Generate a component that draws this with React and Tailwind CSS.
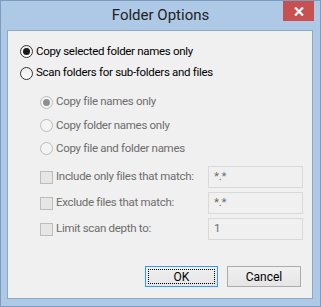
import React from "react";

const font = { fontFamily: 'Roboto, "Noto Sans", sans-serif' };

function Radio({ checked, disabled }) {
  return (
    <span
      className={
        "relative inline-flex items-center justify-center w-[13px] h-[13px] rounded-full border shrink-0 " +
        (disabled
          ? "border-[#bcbcbc] bg-[#f4f4f4]"
          : "border-[#333333] bg-gradient-to-b from-[#ececec] to-[#ffffff]")
      }
    >
      {checked && (
        <span
          className={
            "w-[7px] h-[7px] rounded-full " +
            (disabled ? "bg-[#8f8f8f]" : "bg-[#1a1a1a]")
          }
        />
      )}
    </span>
  );
}

function Checkbox() {
  return (
    <span className="inline-block w-[13px] h-[13px] border border-[#bcbcbc] bg-[#e6e6e6] shrink-0" />
  );
}

export default function App() {
  return (
    <div
      className="w-[321px] h-[307px] bg-[#adc9e6] border border-[#7d9dc0] flex flex-col"
      style={font}
    >
      <div className="relative h-[29px] flex items-center justify-center">
        <span className="text-[15px] text-[#222] leading-none mt-[-1px]">Folder Options</span>
        <div className="absolute right-[6px] top-0 w-[31px] h-[20px] bg-[#c75050] flex items-center justify-center">
          <svg width="10" height="9" viewBox="0 0 10 9">
            <path d="M1 0.5 L9 8.5 M9 0.5 L1 8.5" stroke="#fff" strokeWidth="2.2" />
          </svg>
        </div>
      </div>
      <div className="ml-[6px] w-[306px] h-[269px] border border-[#8ea9c6] bg-[#f0f0f0] flex flex-col text-[11.5px] tracking-[-0.3px] leading-none whitespace-nowrap">
        <div className="pt-[10px] pl-[12px]">
          <div className="h-[21px] flex items-center gap-[3px] text-black">
            <Radio checked />
            <span>Copy selected folder names only</span>
          </div>
          <div className="h-[22px] flex items-center gap-[3px] text-black">
            <Radio />
            <span>Scan folders for sub-folders and files</span>
          </div>
        </div>
        <div className="pl-[32px] mt-[6px] text-[#6d6d6d]">
          <div className="h-[24px] flex items-center gap-[3px]">
            <Radio checked disabled />
            <span>Copy file names only</span>
          </div>
          <div className="h-[23px] flex items-center gap-[3px]">
            <Radio disabled />
            <span>Copy folder names only</span>
          </div>
          <div className="h-[23px] flex items-center gap-[3px]">
            <Radio disabled />
            <span>Copy file and folder names</span>
          </div>
        </div>
        <div className="pl-[32px] mt-[6px] text-[#6d6d6d]">
          {[
            ["Include only files that match:", "*.*"],
            ["Exclude files that match:", "*.*"],
            ["Limit scan depth to:", "1"],
          ].map(([label, val]) => (
            <div key={label} className="h-[26px] flex items-start">
              <div className="w-[168px] h-[22px] flex items-center gap-[3px]">
                <Checkbox />
                <span>{label}</span>
              </div>
              <div className="w-[95px] h-[22px] border border-[#d9d9d9] bg-[#f0f0f0] flex items-center pl-[5px] text-[#6d6d6d]">
                {val}
              </div>
            </div>
          ))}
        </div>
        <div className="mt-[22px] flex justify-end gap-[9px] pr-[11px]">
          <button className="w-[73px] h-[21px] border border-[#3399ff] bg-gradient-to-b from-[#f0f0f0] to-[#e5e5e5] p-[2px] text-black text-[12px] tracking-normal">
            <span className="w-full h-full flex items-center justify-center border border-dotted border-[#000]">
              OK
            </span>
          </button>
          <button className="w-[74px] h-[21px] border border-[#acacac] bg-gradient-to-b from-[#f0f0f0] to-[#e5e5e5] flex items-center justify-center text-black text-[12px] tracking-normal">
            Cancel
          </button>
        </div>
      </div>
    </div>
  );
}
